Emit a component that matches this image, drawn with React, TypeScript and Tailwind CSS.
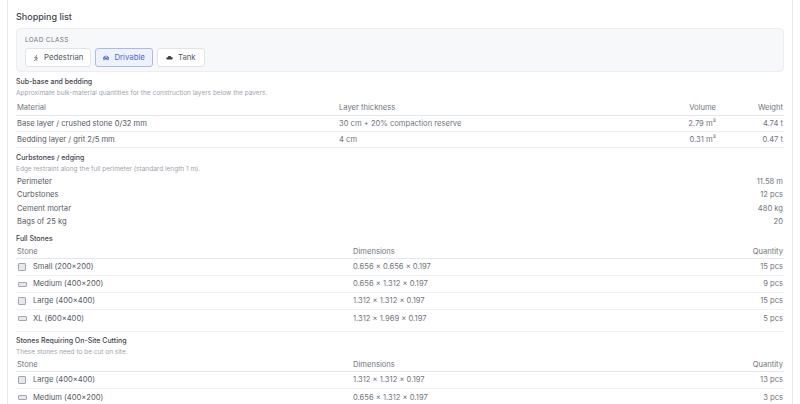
import { FaWalking, FaCar } from 'react-icons/fa'

const font = { fontFamily: 'Inter, "Liberation Sans", sans-serif' }

function TankIcon({ className }: { className?: string }) {
  return (
    <svg viewBox="0 0 16 10" className={className} fill="currentColor">
      <path d="M4 4.2c0-1.6 1.7-2.7 4-2.7s4 1.1 4 2.7h0.5L15.5 3.6v0.9L12.8 5.2H14.5c0.8 0 1.2 0.6 1 1.2L14.8 8.5c-0.2 0.6-0.7 1-1.3 1H2.5c-0.6 0-1.1-0.4-1.3-1L0.5 6.4C0.3 5.8 0.7 5.2 1.5 5.2H4z" />
    </svg>
  )
}

function StoneIcon({ wide }: { wide?: boolean }) {
  return (
    <span className="w-[10px] flex items-center justify-center">
      {wide ? (
        <span className="block w-[9px] h-[5px] rounded-[1px] border border-[#a3a8b0] bg-[#e6e8eb]" />
      ) : (
        <span className="block w-[8px] h-[8px] rounded-[1px] border border-[#a3a8b0] bg-[#e6e8eb]" />
      )}
    </span>
  )
}

function SectionTitle({ title, desc }: { title: string; desc?: string }) {
  return (
    <div>
      <div className="text-[7px] leading-[10px] font-medium text-[#3f444d]">{title}</div>
      {desc && <div className="text-[6.5px] leading-[10px] mt-[1px] text-[#a0a5ad]">{desc}</div>}
    </div>
  )
}

const layers = [
  { name: 'Base layer / crushed stone 0/32 mm', thickness: '30 cm + 20% compaction reserve', volume: '2.79 m³', weight: '4.74 t' },
  { name: 'Bedding layer / grit 2/5 mm', thickness: '4 cm', volume: '0.31 m³', weight: '0.47 t' },
]

const curbs = [
  ['Perimeter', '11.58 m'],
  ['Curbstones', '12 pcs'],
  ['Cement mortar', '480 kg'],
  ['Bags of 25 kg', '20'],
]

const fullStones = [
  { name: 'Small (200×200)', wide: false, dims: '0.656 × 0.656 × 0.197', qty: '15 pcs' },
  { name: 'Medium (400×200)', wide: true, dims: '0.656 × 1.312 × 0.197', qty: '9 pcs' },
  { name: 'Large (400×400)', wide: false, dims: '1.312 × 1.312 × 0.197', qty: '15 pcs' },
  { name: 'XL (600×400)', wide: true, dims: '1.312 × 1.969 × 0.197', qty: '5 pcs' },
]

const cutStones = [
  { name: 'Large (400×400)', wide: false, dims: '1.312 × 1.312 × 0.197', qty: '13 pcs' },
  { name: 'Medium (400×200)', wide: true, dims: '0.656 × 1.312 × 0.197', qty: '3 pcs' },
]

function StoneTable({ rows }: { rows: typeof fullStones }) {
  return (
    <div className="text-[7.6px]">
      <div className="grid grid-cols-[336px_1fr_80px] items-center h-[14px] border-b border-[#e5e7eb] text-[#71767e] px-px">
        <span>Stone</span>
        <span>Dimensions</span>
        <span className="text-right">Quantity</span>
      </div>
      {rows.map((r) => (
        <div
          key={r.name}
          className="grid grid-cols-[336px_1fr_80px] items-center h-[17px] border-b border-[#f0f1f3] last:border-b-0 px-px"
        >
          <span className="flex items-center gap-[6px] text-[#555b66]">
            <StoneIcon wide={r.wide} />
            {r.name}
          </span>
          <span className="text-[#71767e]">{r.dims}</span>
          <span className="text-right text-[#71767e]">{r.qty}</span>
        </div>
      ))}
    </div>
  )
}

export default function App() {
  return (
    <div className="w-[800px] h-[404px] overflow-hidden bg-white" style={font}>
      <div className="mx-[7px] h-full border-x border-[#e8e9ec] bg-white px-2 pt-[11px]">
        <h2 className="text-[9px] leading-[12px] font-medium text-[#3f444d]">Shopping list</h2>

        {/* load class */}
        <div className="mt-[5px] h-[44px] rounded-[4px] border border-[#eceef2] bg-[#f7f8fa] px-2 pt-[7px]">
          <div className="text-[6.4px] leading-[9px] tracking-[0.06em] uppercase text-[#71767e]">Load class</div>
          <div className="mt-[3px] flex gap-[4px]">
            <button className="h-[19px] flex items-center gap-[5px] rounded-[3px] border border-[#e2e4e8] bg-white px-[7px] text-[7.8px] text-[#555b66]">
              <FaWalking className="w-[6px] h-[6px] text-[#6b7280]" />
              Pedestrian
            </button>
            <button className="h-[19px] flex items-center gap-[5px] rounded-[3px] border border-[#aab9f2] bg-[#eef2fe] px-[7px] text-[7.8px] text-[#4f68d6]">
              <FaCar className="w-[6px] h-[6px]" />
              Drivable
            </button>
            <button className="h-[19px] flex items-center gap-[5px] rounded-[3px] border border-[#e2e4e8] bg-white px-[8px] text-[7.8px] text-[#555b66]">
              <TankIcon className="w-[7px] h-[5px] text-[#374151]" />
              Tank
            </button>
          </div>
        </div>

        {/* sub-base */}
        <div className="mt-[5px]">
          <SectionTitle title="Sub-base and bedding" desc="Approximate bulk-material quantities for the construction layers below the pavers." />
          <div className="mt-[2px] text-[7.6px]">
            <div className="grid grid-cols-[322px_1fr_70px_67px] items-center h-[16px] border-b border-[#e5e7eb] text-[#71767e] px-px">
              <span>Material</span>
              <span>Layer thickness</span>
              <span className="text-right">Volume</span>
              <span className="text-right">Weight</span>
            </div>
            {layers.map((l) => (
              <div
                key={l.name}
                className="grid grid-cols-[322px_1fr_70px_67px] items-center h-[16px] border-b border-[#eceef1] px-px"
              >
                <span className="text-[#555b66]">{l.name}</span>
                <span className="text-[#71767e]">{l.thickness}</span>
                <span className="text-right text-[#71767e]">{l.volume}</span>
                <span className="text-right text-[#71767e]">{l.weight}</span>
              </div>
            ))}
          </div>
        </div>

        {/* curbstones */}
        <div className="mt-[5px]">
          <SectionTitle title="Curbstones / edging" desc="Edge restraint along the full perimeter (standard length 1 m)." />
          <div className="text-[7.6px] mt-[1px]">
            {curbs.map(([k, v]) => (
              <div key={k} className="flex justify-between items-center h-[13.3px] px-px">
                <span className="text-[#555b66]">{k}</span>
                <span className="text-[#71767e]">{v}</span>
              </div>
            ))}
          </div>
        </div>

        {/* full stones */}
        <div className="mt-[6px]">
          <SectionTitle title="Full Stones" />
          <div className="mt-[1px]">
            <StoneTable rows={fullStones} />
          </div>
        </div>

        {/* cutting */}
        <div className="mt-[4px] border-t border-[#f0f1f3] pt-[4px]">
          <SectionTitle title="Stones Requiring On-Site Cutting" desc="These stones need to be cut on site." />
          <div className="mt-[1px]">
            <StoneTable rows={cutStones} />
          </div>
        </div>
      </div>
    </div>
  )
}
